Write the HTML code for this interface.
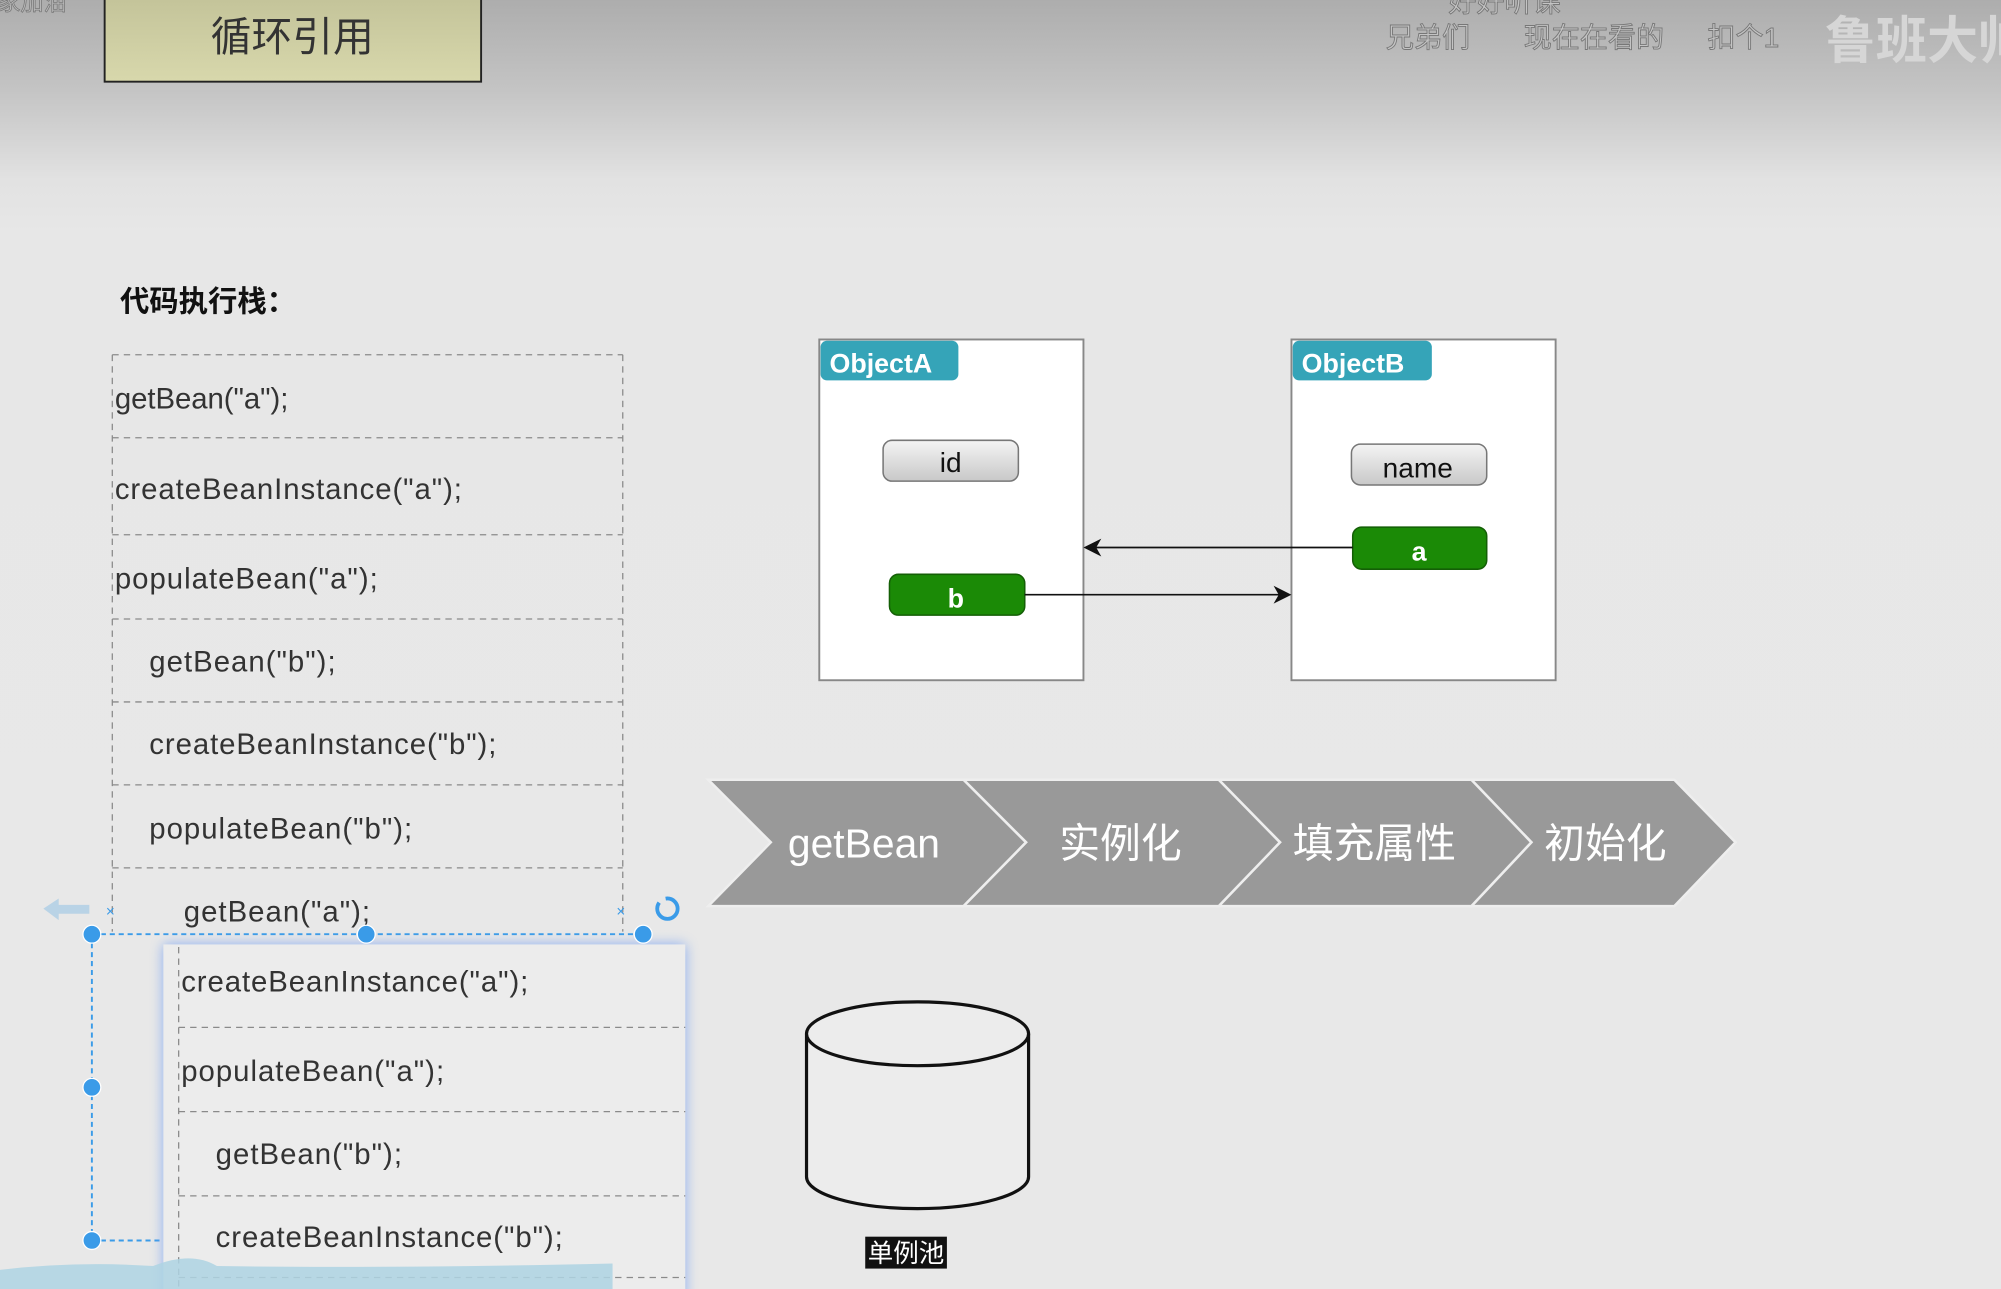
<!DOCTYPE html>
<html><head><meta charset="utf-8"><style>
html,body{margin:0;padding:0;width:2001px;height:1289px;overflow:hidden;background:#e8e8e8}
svg{display:block}
text{font-family:"Liberation Sans","Noto Sans CJK SC",sans-serif}
</style></head><body>
<svg width="2001" height="1289" viewBox="0 0 1568 1010" preserveAspectRatio="none" xmlns="http://www.w3.org/2000/svg">
<defs>
<linearGradient id="bg" x1="0" y1="0" x2="0" y2="1">
<stop offset="0" stop-color="#adadad"/><stop offset="0.07" stop-color="#c4c4c4"/><stop offset="0.14" stop-color="#e2e2e2"/><stop offset="0.18" stop-color="#e7e7e7"/><stop offset="1" stop-color="#e8e8e8"/>
</linearGradient>
<linearGradient id="tb" x1="0" y1="0" x2="0" y2="1"><stop offset="0" stop-color="#c3c399"/><stop offset="1" stop-color="#d8d8ac"/></linearGradient>
<linearGradient id="pill" x1="0" y1="0" x2="0" y2="1"><stop offset="0" stop-color="#f4f4f4"/><stop offset="1" stop-color="#c8c8c8"/></linearGradient>
<filter id="glow" x="-10%" y="-10%" width="120%" height="120%"><feGaussianBlur stdDeviation="5"/></filter>
</defs>
<rect width="1568" height="1010" fill="url(#bg)"/>
<!-- title -->
<rect x="82" y="-3" width="295" height="67" fill="url(#tb)" stroke="#222" stroke-width="1.5"/>
<text x="229" y="40" font-size="32" fill="#333" text-anchor="middle">循环引用</text>
<text x="-2" y="8" font-size="18" fill="#bbb" stroke="#777" stroke-width="0.6">家加油</text>
<!-- watermark -->
<g font-size="22" fill="#c4c4c4" stroke="#777" stroke-width="0.7">
<text x="1135" y="9">好好听课</text>
<text x="1086" y="37">兄弟们</text>
<text x="1194" y="37">现在在看的</text>
<text x="1338" y="37">扣个1</text>
</g>
<text x="1430" y="46" font-size="40" fill="#d6d6d6" font-weight="bold">鲁班大帅</text>
<!-- stack header -->
<text x="94" y="244" font-size="23" font-weight="bold" fill="#111">代码执行栈：</text>
<!-- upper stack -->
<g stroke="#8a8a8a" stroke-width="1" stroke-dasharray="5,4" fill="none">
<line x1="88" y1="278" x2="488" y2="278"/>
<line x1="88" y1="343" x2="488" y2="343"/>
<line x1="88" y1="419" x2="488" y2="419"/>
<line x1="88" y1="485" x2="488" y2="485"/>
<line x1="88" y1="550" x2="488" y2="550"/>
<line x1="88" y1="615" x2="488" y2="615"/>
<line x1="88" y1="680" x2="488" y2="680"/>
<line x1="88" y1="278" x2="88" y2="730"/>
<line x1="488" y1="278" x2="488" y2="730"/>
</g>
<g font-size="23" fill="#333">
<text x="90" y="320" textLength="136">getBean("a");</text>
<text x="90" y="391" textLength="272">createBeanInstance("a");</text>
<text x="90" y="461" textLength="206">populateBean("a");</text>
<text x="117" y="526" textLength="146">getBean("b");</text>
<text x="117" y="591" textLength="272">createBeanInstance("b");</text>
<text x="117" y="657" textLength="206">populateBean("b");</text>
<text x="144" y="722" textLength="146">getBean("a");</text>
</g>
<!-- selection handles -->
<path d="M34 712 L46 704 L46 709 L70 709 L70 716 L46 716 L46 721 Z" fill="#b9d3e6"/>
<text x="83" y="718" font-size="12" fill="#3a9be8">×</text>
<text x="483" y="718" font-size="12" fill="#3a9be8">×</text>
<circle cx="523" cy="712" r="8" fill="none" stroke="#3a9be8" stroke-width="3" stroke-dasharray="30,6"/>
<g stroke="#3a9be8" stroke-width="1.5" stroke-dasharray="4,3" fill="none">
<line x1="72" y1="732" x2="504" y2="732"/>
<line x1="72" y1="732" x2="72" y2="972"/>
<line x1="72" y1="972" x2="128" y2="972"/>
</g>
<!-- lower panel -->
<rect x="128" y="740" width="409" height="280" fill="#7fa6f2" filter="url(#glow)" opacity="0.9"/>
<rect x="128" y="740" width="409" height="280" fill="#ececec"/>
<g stroke="#8a8a8a" stroke-width="1" stroke-dasharray="5,4" fill="none">
<line x1="140" y1="742" x2="140" y2="1010"/>
<line x1="140" y1="805" x2="537" y2="805"/>
<line x1="140" y1="871" x2="537" y2="871"/>
<line x1="140" y1="937" x2="537" y2="937"/>
<line x1="140" y1="1001" x2="537" y2="1001"/>
</g>
<g font-size="23" fill="#333">
<text x="142" y="777" textLength="272">createBeanInstance("a");</text>
<text x="142" y="847" textLength="206">populateBean("a");</text>
<text x="169" y="912" textLength="146">getBean("b");</text>
<text x="169" y="977" textLength="272">createBeanInstance("b");</text>
</g>
<g fill="#3a9be8" stroke="#fff" stroke-width="1">
<circle cx="72" cy="732" r="7"/><circle cx="287" cy="732" r="7"/><circle cx="504" cy="732" r="7"/>
<circle cx="72" cy="852" r="7"/><circle cx="72" cy="972" r="7"/>
</g>
<!-- bottom wave -->
<path d="M0 995 Q60 988 120 992 Q150 980 170 992 Q300 994 480 990 L480 1010 L0 1010 Z" fill="#aed3e3" opacity="0.85"/>
<!-- objects -->
<rect x="642" y="266" width="207" height="267" fill="#fff" stroke="#888" stroke-width="1.5"/>
<rect x="643" y="267" width="108" height="31" rx="5" fill="#35a4b8"/>
<text x="650" y="292" font-size="21" font-weight="bold" fill="#fff">ObjectA</text>
<rect x="692" y="345" width="106" height="32" rx="7" fill="url(#pill)" stroke="#777" stroke-width="1.2"/>
<text x="745" y="370" font-size="22" fill="#111" text-anchor="middle">id</text>
<rect x="697" y="450" width="106" height="32" rx="7" fill="#1b8a06" stroke="#145f06" stroke-width="1.2"/>
<text x="749" y="476" font-size="21" font-weight="bold" fill="#fff" text-anchor="middle">b</text>
<rect x="1012" y="266" width="207" height="267" fill="#fff" stroke="#888" stroke-width="1.5"/>
<rect x="1013" y="267" width="109" height="31" rx="5" fill="#35a4b8"/>
<text x="1020" y="292" font-size="21" font-weight="bold" fill="#fff">ObjectB</text>
<rect x="1059" y="348" width="106" height="32" rx="7" fill="url(#pill)" stroke="#777" stroke-width="1.2"/>
<text x="1111" y="374" font-size="22" fill="#111" text-anchor="middle">name</text>
<rect x="1060" y="413" width="105" height="33" rx="7" fill="#1b8a06" stroke="#145f06" stroke-width="1.2"/>
<text x="1112" y="439" font-size="21" font-weight="bold" fill="#fff" text-anchor="middle">a</text>
<line x1="1060" y1="429" x2="856" y2="429" stroke="#111" stroke-width="1.3"/>
<path d="M849 429 L863 422 L859 429 L863 436 Z" fill="#111"/>
<line x1="803" y1="466" x2="1005" y2="466" stroke="#111" stroke-width="1.3"/>
<path d="M1012 466 L998 459 L1002 466 L998 473 Z" fill="#111"/>
<!-- chevrons -->
<g fill="#999" stroke="#eee" stroke-width="2">
<path d="M1153 611 L1312 611 L1360 660 L1312 710 L1153 710 L1200 660 Z"/>
<path d="M955 611 L1153 611 L1200 660 L1153 710 L955 710 L1003 660 Z"/>
<path d="M755 611 L955 611 L1003 660 L955 710 L755 710 L804 660 Z"/>
<path d="M555 611 L755 611 L804 660 L755 710 L555 710 L604 660 Z"/>
</g>
<g font-size="32" fill="#fff" text-anchor="middle">
<text x="677" y="672">getBean</text>
<text x="878" y="672">实例化</text>
<text x="1077" y="672">填充属性</text>
<text x="1258" y="672">初始化</text>
</g>
<!-- cylinder -->
<path d="M632 810 L632 922 A87 25 0 0 0 806 922 L806 810" fill="#ececec" stroke="#111" stroke-width="2.5"/>
<ellipse cx="719" cy="810" rx="87" ry="25" fill="#ececec" stroke="#111" stroke-width="2.5"/>
<rect x="678" y="969" width="64" height="25" fill="#111"/>
<text x="710" y="989" font-size="20" fill="#fff" text-anchor="middle">单例池</text>
</svg>
</body></html>
